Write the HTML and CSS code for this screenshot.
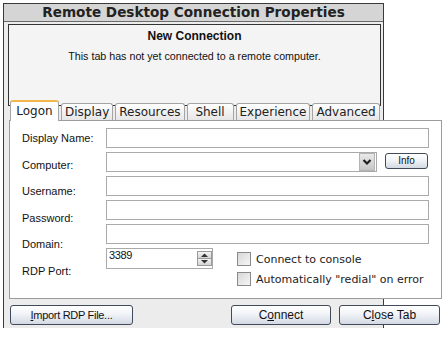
FILE: index.html
```html
<!DOCTYPE html>
<html>
<head>
<meta charset="utf-8">
<title>Remote Desktop Connection Properties</title>
<link rel="stylesheet" href="styles.css">
</head>
<body>
<div class="frame">
  <div class="titlebar">Remote Desktop Connection Properties</div>
  <div class="status">
    <div class="status-title">New Connection</div>
    <div class="status-text">This tab has not yet connected to a remote computer.</div>
  </div>
  <div class="tabs">
    <div class="tab selected">Logon</div>
    <div class="tab">Display</div>
    <div class="tab">Resources</div>
    <div class="tab">Shell</div>
    <div class="tab">Experience</div>
    <div class="tab">Advanced</div>
  </div>
  <div class="panel">
    <div class="labels">
      <div class="label">Display Name:</div>
      <div class="label">Computer:</div>
      <div class="label">Username:</div>
      <div class="label">Password:</div>
      <div class="label">Domain:</div>
      <div class="label">RDP Port:</div>
    </div>
    <div class="fields">
      <div class="input"></div>
      <div class="row">
        <div class="combo">
          <div class="combo-btn">
            <svg width="16" height="18" viewBox="0 0 16 18"><polyline points="4.5,7 8,10.5 11.5,7" fill="none" stroke="#1e1e1e" stroke-width="2.2"/></svg>
          </div>
        </div>
        <div class="btn info">Info</div>
      </div>
      <div class="input"></div>
      <div class="input"></div>
      <div class="input"></div>
      <div class="row">
        <div class="spin">
          <span class="spin-val">3389</span>
          <div class="spin-btns">
            <div class="spin-btn"><svg width="13" height="6" viewBox="0 0 13 6"><polygon points="3,5 6.5,1.5 10,5" fill="#333"/></svg></div>
            <div class="spin-btn"><svg width="13" height="6" viewBox="0 0 13 6"><polygon points="3,1 6.5,4.5 10,1" fill="#333"/></svg></div>
          </div>
        </div>
        <div class="checks">
          <div class="check"><span class="box"></span>Connect to console</div>
          <div class="check"><span class="box"></span>Automatically "redial" on error</div>
        </div>
      </div>
    </div>
  </div>
  <div class="actions">
    <div class="btn import"><u>I</u>mport RDP File...</div>
    <div class="spacer"></div>
    <div class="btn connect">C<u>o</u>nnect</div>
    <div class="btn close">C<u>l</u>ose Tab</div>
  </div>
</div>
</body>
</html>
```
FILE: styles.css
```css
* { box-sizing: border-box; }
html, body { margin: 0; padding: 0; background: #fff; }
body { font-family: "Liberation Sans", Arial, sans-serif; color: #111; }

.frame {
  margin: 3px 0 0 3px;
  width: 381px;
  height: 325px;
  border: 1px solid #3a3a3a;
  border-bottom: none;
  background: #ececec;
}

.titlebar {
  height: 18px;
  background: #d5d5d5;
  border-bottom: 1px solid #6a6a6a;
  font-family: "DejaVu Sans", sans-serif;
  font-weight: bold;
  font-size: 13.6px;
  line-height: 17px;
  text-align: center;
  color: #222;
}

.status {
  margin: 2px 2px 0 4px;
  height: 82px;
  border: 1px solid #333;
  background: #f4f4f4;
  text-align: center;
}
.status-title {
  padding-top: 3px;
  font-weight: bold;
  font-size: 12px;
  line-height: 16px;
}
.status-text {
  margin-top: 4px;
  font-size: 10.7px;
  line-height: 16px;
}

.tabs {
  position: relative;
  z-index: 2;
  margin-top: -6px;
  height: 20px;
  padding-left: 6px;
  display: flex;
  align-items: flex-end;
  gap: 2px;
}
.tab {
  height: 17px;
  min-width: 47px;
  padding: 0 3px;
  border: 1px solid #a4a4a4;
  border-bottom: none;
  border-radius: 3px 3px 0 0;
  background: linear-gradient(#ffffff, #e6e6e6);
  font-family: "DejaVu Sans", sans-serif;
  font-size: 12px;
  line-height: 17px;
  text-align: center;
  color: #222;
}
.tab.selected {
  height: 21px;
  margin-bottom: -1px;
  width: 49px;
  border-top: 2px solid #f2b84c;
  background: #fff;
  line-height: 18px;
}

.panel {
  position: relative;
  z-index: 1;
  margin-left: 5px;
  width: 433px;
  height: 179px;
  border: 1px solid #9c9c9c;
  background: #fff;
  padding: 4px 0 0 12px;
  display: flex;
}
.labels {
  width: 84px;
  font-size: 11px;
}
.label {
  height: 26.5px;
  line-height: 26.5px;
  white-space: nowrap;
}
.fields {
  width: 323px;
  padding-top: 3px;
  display: flex;
  flex-direction: column;
  gap: 4px;
}
.input {
  height: 20px;
  border: 1px solid #aaaaaa;
  background: #fff;
}
.row { display: flex; align-items: flex-start; }

.combo {
  width: 271px;
  height: 20px;
  border: 1px solid #aaaaaa;
  display: flex;
  justify-content: flex-end;
  padding: 0 1px 0 0;
  align-items: center;
}
.combo-btn {
  width: 16px;
  height: 18px;
  background: linear-gradient(#e9e9e9, #c6c6c6);
  border: 1px solid #b4b4b4;
  display: flex;
}
.combo-btn svg { margin: -1px; }

.btn {
  border: 1px solid #404a58;
  border-radius: 3px;
  background: linear-gradient(#ffffff 0%, #f1f3f7 45%, #d3d9e4 100%);
  text-align: center;
  font-size: 12px;
  color: #111;
}
.info {
  margin: 1px 0 0 8px;
  width: 43px;
  height: 16px;
  font-size: 10px;
  line-height: 14px;
}

.spin {
  width: 107px;
  height: 21px;
  border: 1px solid #aaaaaa;
  display: flex;
  justify-content: space-between;
  align-items: flex-start;
  padding: 0 0 0 2px;
}
.spin-val {
  font-size: 11px;
  line-height: 12px;
  letter-spacing: -0.4px;
}
.spin-btns {
  margin: 2px 0 0 0;
  width: 15px;
  height: 15px;
  border: 1px solid #9a9a9a;
  display: flex;
  flex-direction: column;
}
.spin-btn {
  flex: 1;
  background: linear-gradient(#f4f4f4, #d4d4d4);
  display: flex;
  align-items: center;
  justify-content: center;
}
.spin-btn + .spin-btn { border-top: 1px solid #9a9a9a; }

.checks {
  margin: 1px 0 0 24px;
  display: flex;
  flex-direction: column;
}
.check {
  height: 20px;
  display: flex;
  align-items: center;
  font-family: "DejaVu Sans", sans-serif;
  font-size: 11px;
  color: #222;
  white-space: nowrap;
}
.box {
  width: 14px;
  height: 14px;
  margin-right: 5px;
  border: 1px solid #8a8a8a;
  background: linear-gradient(135deg, #d8d8d8, #f6f6f6);
}

.actions {
  margin-top: 6px;
  width: 436px;
  height: 20px;
  padding-left: 6px;
  display: flex;
  gap: 8px;
}
.actions .btn { height: 20px; line-height: 18px; }
.spacer { flex: 1; }
.import { width: 123px; font-size: 11px; letter-spacing: -0.3px; }
.connect { width: 100px; }
.close { width: 101px; position: relative; z-index: 1; }
```
